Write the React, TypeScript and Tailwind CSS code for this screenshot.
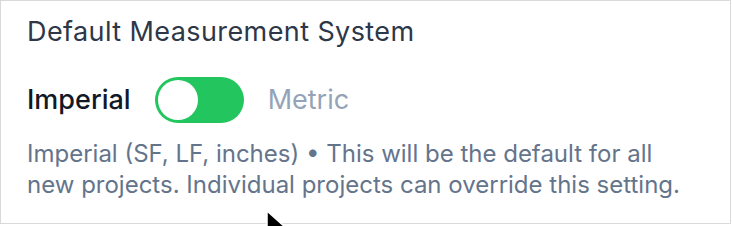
import { useState } from "react"

export default function App() {
  const [metric, setMetric] = useState(false)

  return (
    <div className="relative h-[226px] w-[732px] overflow-hidden bg-white font-['Inter',sans-serif]">
      <div className="h-[224px] w-[731px] border border-[#d9d9d9] px-[26px] pt-[14px]">
        <h2 className="text-[27px] leading-[34px] tracking-[0.015em] text-[#2d3748]">Default Measurement System</h2>

        <div className="mt-[28px] flex h-[46px] items-center">
          <span className={`text-[27px] font-medium ${metric ? "text-[#94a3b8]" : "text-[#111827]"}`}>Imperial</span>
          <button
            onClick={() => setMetric(!metric)}
            className="ml-[24px] flex h-[46px] w-[89px] items-center rounded-full bg-[#22c55e] p-[3px]"
          >
            <span className={`h-[40px] w-[40px] rounded-full bg-white transition-transform ${metric ? "translate-x-[43px]" : ""}`} />
          </button>
          <span className={`ml-[24px] text-[27px] ${metric ? "text-[#111827]" : "text-[#94a3b8]"}`}>Metric</span>
        </div>

        <p className="mt-[15px] w-[662px] text-[24px] leading-[31px] text-[#64748b]">
          Imperial (SF, LF, inches) • This will be the default for all new projects. Individual projects can override this setting.
        </p>
      </div>

      {/* mouse pointer */}
      <svg className="absolute left-[266px] top-[210px]" width="22" height="30" viewBox="0 0 22 30">
        <path d="M1 1 L1 24 L7 18 L11 28 L15 26 L11 17 L19 17 Z" fill="#000" stroke="#fff" strokeWidth="1.5" />
      </svg>
    </div>
  )
}
